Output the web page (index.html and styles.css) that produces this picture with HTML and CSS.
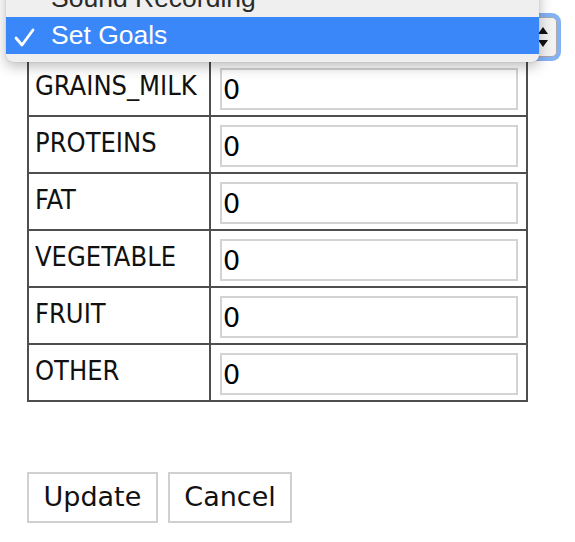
FILE: index.html
```html
<!DOCTYPE html>
<html>
<head>
<meta charset="utf-8">
<link rel="stylesheet" href="styles.css">
</head>
<body>
<div class="header">
  <div class="select">
    <svg class="arrows" width="12" height="22" viewBox="0 0 12 22"><path d="M6 1 L11 8 L1 8 Z M6 21 L11 14 L1 14 Z" fill="#111"/></svg>
  </div>
  <div class="menu">
    <div class="item">Sound Recording</div>
    <div class="item selected">
      <svg class="check" width="22" height="20" viewBox="0 0 22 20"><path d="M2 11 L8 18 L19 3" fill="none" stroke="#fff" stroke-width="2.8" stroke-linecap="round" stroke-linejoin="round"/></svg>
      Set Goals
    </div>
  </div>
</div>
<div class="grid">
  <div class="label">GRAINS_MILK</div><div class="field"><input class="input" type="text" value="0"></div>
  <div class="label">PROTEINS</div><div class="field"><input class="input" type="text" value="0"></div>
  <div class="label">FAT</div><div class="field"><input class="input" type="text" value="0"></div>
  <div class="label">VEGETABLE</div><div class="field"><input class="input" type="text" value="0"></div>
  <div class="label">FRUIT</div><div class="field"><input class="input" type="text" value="0"></div>
  <div class="label">OTHER</div><div class="field"><input class="input" type="text" value="0"></div>
</div>
<div class="buttons">
  <button class="btn">Update</button>
  <button class="btn">Cancel</button>
</div>
</body>
</html>
```

FILE: styles.css
```css
html, body {
  margin: 0;
  padding: 0;
  background: #fff;
}
body {
  font-family: "DejaVu Sans", Verdana, sans-serif;
  color: #111;
  width: 575px;
  height: 542px;
  overflow: hidden;
}
.header {
  position: relative;
  height: 58px;
  padding-top: 17px;
  box-sizing: border-box;
}
.select {
  margin-left: 27px;
  width: 530px;
  height: 40px;
  box-sizing: border-box;
  border: 1px solid #a9a9a9;
  border-radius: 5px;
  background: #f2f2f2;
  box-shadow: 0 0 0 4px rgba(110, 165, 245, 0.85);
  display: flex;
  justify-content: flex-end;
  align-items: center;
  padding-right: 7px;
}
.arrows {
  display: block;
}
.menu {
  position: absolute;
  left: 6px;
  top: -20px;
  width: 533px;
  background: #efefef;
  border-radius: 0 0 7px 7px;
  padding-bottom: 8px;
  box-shadow: 0 4px 14px rgba(0, 0, 0, 0.28), 0 0 1px rgba(0, 0, 0, 0.3);
  font-family: "Liberation Sans", Arial, sans-serif;
  font-size: 26.5px;
}
.item {
  position: relative;
  height: 37px;
  line-height: 37px;
  padding-left: 45px;
  color: #2a2a2a;
}
.item.selected {
  background: #3987f8;
  color: #fff;
}
.check {
  position: absolute;
  left: 8px;
  top: 10px;
}
.grid {
  margin-left: 27px;
  width: 501px;
  display: grid;
  grid-template-columns: 180px 315px;
  grid-auto-rows: 55px;
  gap: 2px;
  padding: 2px;
  box-sizing: border-box;
  background: #4e4e4e;
}
.label {
  background: #fff;
  font-family: "DejaVu Sans Condensed", "DejaVu Sans", sans-serif;
  font-stretch: condensed;
  font-size: 27px;
  line-height: 32px;
  padding: 10px 0 0 6px;
  color: #111;
}
.field {
  background: #fff;
  padding: 8px 8px 0 9px;
}
.input {
  display: block;
  width: 298px;
  height: 42px;
  box-sizing: border-box;
  border: 2px solid #d3d3d3;
  padding: 0 0 0 1px;
  margin: 0;
  font-family: "DejaVu Sans", sans-serif;
  font-size: 27px;
  color: #000;
  background: #fff;
  outline: none;
}
.buttons {
  margin: 70px 0 0 27px;
  display: flex;
  gap: 10px;
}
.btn {
  height: 51px;
  box-sizing: border-box;
  border: 2px solid #d0d0d0;
  background: #fff;
  padding: 0 14.5px 2px 14.5px;
  font-family: "DejaVu Sans", sans-serif;
  font-size: 27px;
  color: #111;
  border-radius: 0;
}
```
